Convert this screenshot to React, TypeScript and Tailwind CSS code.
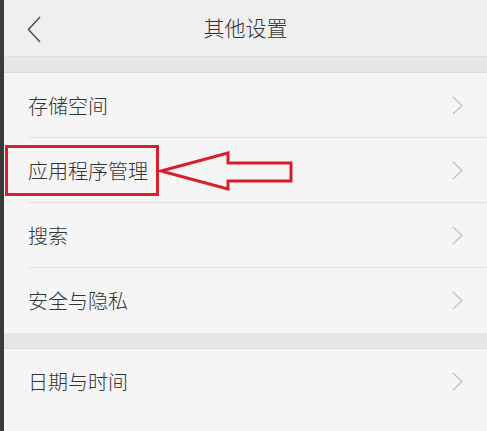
const groups = [
  ['存储空间', '应用程序管理', '搜索', '安全与隐私'],
  ['日期与时间'],
];

function Row({ label, last }: { label: string; last: boolean }) {
  return (
    <div className="relative flex h-[65px] items-center bg-[#f5f5f5] pl-[24px] pr-[24px]">
      <span className="flex-1 text-[20px] font-light text-[#333]">{label}</span>
      <svg width="11" height="19" viewBox="0 0 11 19" className="text-[#c4c4c4]">
        <path d="M1 1 L10 9.5 L1 18" fill="none" stroke="currentColor" strokeWidth="1.4" />
      </svg>
      {!last && <div className="absolute bottom-0 left-[24px] right-0 h-px bg-[#e2e2e2]" />}
    </div>
  );
}

export default function App() {
  return (
    <div
      className="relative flex h-[431px] w-[487px] overflow-hidden bg-[#3a3a3a]"
      style={{ fontFamily: '"Noto Sans CJK SC", "Noto Sans", sans-serif' }}
    >
      <div className="ml-[4px] flex flex-1 flex-col bg-[#f5f5f5]">
        {/* header */}
        <div className="relative flex h-[57px] items-center justify-center border-b border-[#dedede] bg-[#efefef]">
          <svg
            width="14"
            height="27"
            viewBox="0 0 14 27"
            className="absolute left-[23px] top-[16px] text-[#555]"
          >
            <path d="M13 1 L1.5 13.5 L13 26" fill="none" stroke="currentColor" strokeWidth="1.6" />
          </svg>
          <span className="text-[21px] font-light text-[#333]">其他设置</span>
        </div>

        {groups.map((items, gi) => (
          <div key={gi} className="flex flex-col">
            <div className="h-[16px] border-b border-[#dcdcdc] bg-[#e6e6e6]" />
            {items.map((label, i) => (
              <Row key={label} label={label} last={i === items.length - 1} />
            ))}
          </div>
        ))}
      </div>

      {/* annotation */}
      <div className="absolute left-[5px] top-[145px] h-[51px] w-[154px] border-[3px] border-[#d8202c]" />
      <svg className="absolute left-0 top-0" width="487" height="431">
        <polygon
          points="161,171 228,153 228,163 291,163 291,181 228,181 228,189"
          fill="none"
          stroke="#d8202c"
          strokeWidth="3"
          strokeLinejoin="miter"
        />
      </svg>
    </div>
  );
}
